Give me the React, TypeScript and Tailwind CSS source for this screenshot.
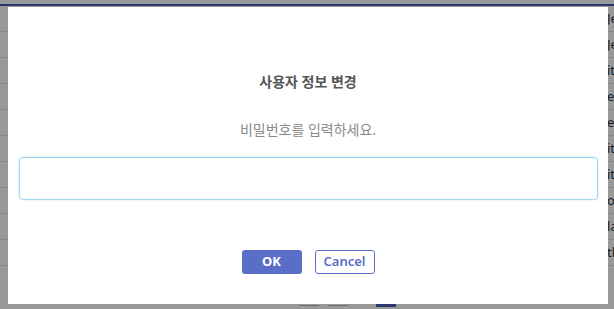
import React from "react";

const rows = ["Je", "Je", "it", "eC", "eC", "it", "it", "or", "la", "th"];

export default function App() {
  return (
    <div className="relative h-[309px] w-[614px] overflow-hidden bg-white font-['Noto_Sans','Noto_Sans_CJK_KR',sans-serif]">
      {/* background page */}
      <div className="flex h-full flex-col">
        <div className="h-[4px]" />
        <div className="h-[2px] bg-[#4a5bb8]" />
        <div className="flex flex-col">
          {rows.map((r, i) => (
            <div key={i} className="flex h-[26px] items-center border-b border-[#e2e2e2]">
              <div className="w-[607px] shrink-0" />
              <div className="text-[13px] text-[#333] whitespace-nowrap">{r}</div>
            </div>
          ))}
        </div>
        <div className="flex-1" />
        <div className="flex h-[5px] items-start pl-[299px]">
          <div className="mt-[1px] h-[1px] w-[20px] bg-[#bbb]" />
          <div className="ml-[9px] mt-[1px] h-[1px] w-[20px] bg-[#bbb]" />
          <div className="ml-[28px] h-[3px] w-[20px] bg-[#4a5bb8]" />
        </div>
      </div>

      {/* overlay */}
      <div className="absolute inset-0 bg-black/40" />

      {/* modal */}
      <div className="absolute left-[8px] top-[7px] flex h-[297px] w-[600px] flex-col items-center bg-white">
        <div className="mt-[65px] text-[14px] font-bold leading-[20px] text-[#555]">사용자 정보 변경</div>
        <div className="mt-[28px] text-[14px] leading-[20px] text-[#8a8a8a]">비밀번호를 입력하세요.</div>
        <div className="mt-[17px] h-[43px] w-[579px] self-start ml-[11px] rounded-[4px] border border-[#9fd6f1] shadow-[0_0_2px_#b5e1f6]" />
        <div className="mt-[50px] flex gap-[13px]">
          <button className="h-[24px] w-[60px] rounded-[3px] bg-[#5a6ec8] text-[13px] font-bold text-white">OK</button>
          <button className="h-[24px] w-[60px] rounded-[3px] border border-[#5a6ec8] bg-white text-[13px] font-semibold text-[#5a6ec8]">Cancel</button>
        </div>
      </div>
    </div>
  );
}
